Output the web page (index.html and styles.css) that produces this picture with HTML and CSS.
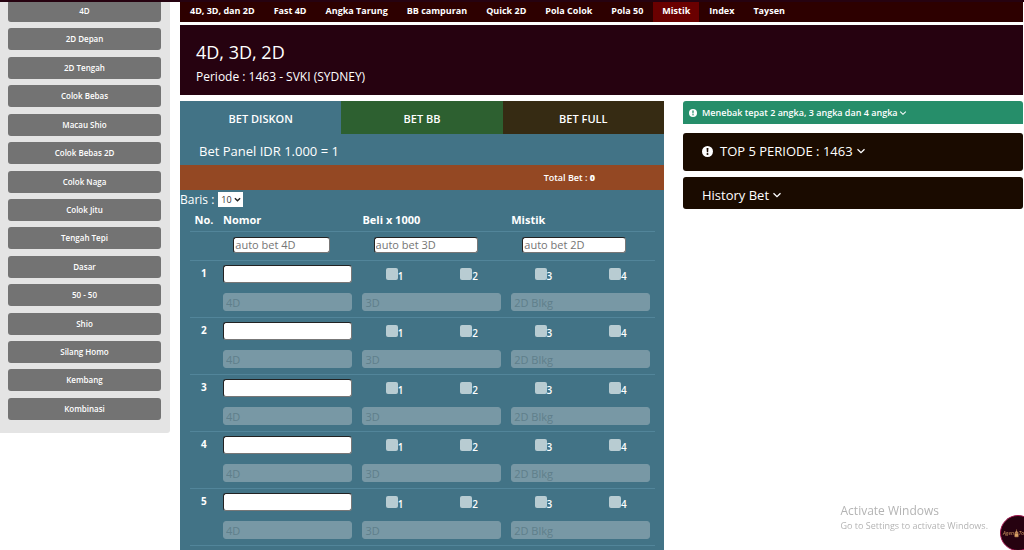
FILE: index.html
```html
<!DOCTYPE html>
<html lang="id">
<head>
<meta charset="utf-8">
<meta name="viewport" content="width=device-width, initial-scale=1">
<title>4D, 3D, 2D</title>
<link rel="stylesheet" href="styles.css">
</head>
<body>
<header class="topbar"></header>
<div class="page">
  <aside class="sidebar">
    <div class="games">
      <button class="game">4D</button>
      <button class="game">2D Depan</button>
      <button class="game">2D Tengah</button>
      <button class="game">Colok Bebas</button>
      <button class="game">Macau Shio</button>
      <button class="game">Colok Bebas 2D</button>
      <button class="game">Colok Naga</button>
      <button class="game">Colok Jitu</button>
      <button class="game">Tengah Tepi</button>
      <button class="game">Dasar</button>
      <button class="game">50 - 50</button>
      <button class="game">Shio</button>
      <button class="game">Silang Homo</button>
      <button class="game">Kembang</button>
      <button class="game">Kombinasi</button>
    </div>
  </aside>
  <main class="main">
    <nav class="nav">
      <a href="#">4D, 3D, dan 2D</a>
      <a href="#">Fast 4D</a>
      <a href="#">Angka Tarung</a>
      <a href="#">BB campuran</a>
      <a href="#">Quick 2D</a>
      <a href="#">Pola Colok</a>
      <a href="#">Pola 50</a>
      <a href="#" class="active">Mistik</a>
      <a href="#">Index</a>
      <a href="#">Taysen</a>
    </nav>
    <section class="hero">
      <h1>4D, 3D, 2D</h1>
      <p>Periode : 1463 - SVKI (SYDNEY)</p>
    </section>
    <div class="columns">
      <section class="panel">
        <div class="tabs">
          <button class="tab">BET DISKON</button>
          <button class="tab tab-bb">BET BB</button>
          <button class="tab tab-full">BET FULL</button>
        </div>
        <h2 class="panel-title">Bet Panel IDR 1.000 = 1</h2>
        <div class="total">Total Bet : <b>0</b></div>
        <div class="rows-select">
          <label for="baris">Baris :</label>
          <select id="baris"><option>10</option><option>20</option></select>
        </div>
        <table class="bets">
          <colgroup><col class="c-no"><col class="c-num"><col class="c-half"><col class="c-half"><col class="c-half"><col class="c-half"></colgroup>
          <thead>
            <tr><th class="no">No.</th><th>Nomor</th><th colspan="2">Beli x 1000</th><th colspan="2">Mistik</th></tr>
            <tr class="auto">
              <td></td>
              <td><input type="text" placeholder="auto bet 4D" aria-label="auto bet 4D"></td>
              <td colspan="2"><input type="text" placeholder="auto bet 3D" aria-label="auto bet 3D"></td>
              <td colspan="2"><input type="text" placeholder="auto bet 2D" aria-label="auto bet 2D"></td>
            </tr>
          </thead>
          <tbody id="bet-rows"></tbody>
        </table>
      </section>
      <aside class="info">
        <button class="hint">
          <svg class="mark" viewBox="0 0 16 16"><circle cx="8" cy="8" r="8" fill="#fff"/><path d="M6.6 3h2.8l-.4 6H7z" fill="currentColor"/><circle cx="8" cy="11.7" r="1.5" fill="currentColor"/></svg>
          <span>Menebak tepat 2 angka, 3 angka dan 4 angka</span>
          <svg class="chev" viewBox="0 0 10 10"><path d="M1.5 3.2 5 6.7l3.5-3.5" fill="none" stroke="#fff" stroke-width="1.3"/></svg>
        </button>
        <button class="card card-top">
          <svg class="mark" viewBox="0 0 16 16"><circle cx="8" cy="8" r="8" fill="#fff"/><path d="M6.6 3h2.8l-.4 6H7z" fill="currentColor"/><circle cx="8" cy="11.7" r="1.5" fill="currentColor"/></svg>
          <span>TOP 5 PERIODE : 1463</span>
          <svg class="chev" viewBox="0 0 10 10"><path d="M1.5 3.2 5 6.7l3.5-3.5" fill="none" stroke="#fff" stroke-width="1.3"/></svg>
        </button>
        <button class="card">
          <span>History Bet</span>
          <svg class="chev" viewBox="0 0 10 10"><path d="M1.5 3.2 5 6.7l3.5-3.5" fill="none" stroke="#fff" stroke-width="1.3"/></svg>
        </button>
      </aside>
    </div>
  </main>
</div>
<div class="activate">
  <p class="activate-title">Activate Windows</p>
  <p>Go to Settings to activate Windows.</p>
</div>
<a class="badge" href="#"><span>Agen</span><svg viewBox="0 0 6 10"><path d="M3 0v3M1 4h4L3 2zM1 5h4v4H1z" fill="#d9a066" stroke="#d9a066" stroke-width=".6"/></svg><span>To</span></a>
<script src="rows.js"></script>
</body>
</html>
```
FILE: styles.css
```css
* { box-sizing: border-box; }
body {
  margin: 0;
  background: #fff;
  color: #fff;
  font-family: "Open Sans", "Noto Sans", sans-serif;
  font-size: 11px;
  line-height: 16px;
}
button, input, select { font: inherit; color: inherit; margin: 0; }
button { border: 0; cursor: pointer; }
h1, h2, p { margin: 0; font-weight: 400; }

.topbar {
  position: fixed;
  top: 0;
  left: 0;
  right: 0;
  height: 2px;
  background: #260210;
  z-index: 2;
}
.page { display: flex; align-items: flex-start; gap: 10px; padding-right: 1px; }

.sidebar {
  flex: 0 0 170px;
  padding: 0 9px 13px 8px;
  background: #e4e4e4;
  border-radius: 0 0 3px 0;
}
.games {
  display: flex;
  flex-direction: column;
  justify-content: space-between;
  min-height: 420px;
}
.game {
  height: 22px;
  padding: 0;
  border-radius: 3px;
  background: #737373;
  font-size: 8px;
  font-weight: 600;
  line-height: 22px;
}

.main { flex: 1; min-width: 0; }
.nav { display: flex; gap: 1px; height: 22px; padding: 2px 1px 0; background: #2d0000; }
.nav a {
  padding: 0 9px;
  color: #fff;
  font-size: 9px;
  font-weight: 700;
  line-height: 18px;
  text-decoration: none;
  white-space: nowrap;
}
.nav .active { background: #6a0000; }
.hero { margin: 3px 0 6px; padding: 15px 16px 6px; background: #260210; }
.hero h1 { font-size: 18px; line-height: 24px; }
.hero p { font-size: 12px; line-height: 25px; }

.columns {
  display: grid;
  grid-template-columns: 484fr 340fr;
  gap: 19px;
  align-items: start;
}
.panel { padding-bottom: 4px; background: #427386; }
.tabs { display: grid; grid-template-columns: 1fr 1fr 1fr; }
.tab { height: 33px; padding: 2px 0 0; background: #427386; font-size: 11px; font-weight: 600; }
.tab-bb { background: #2d6030; }
.tab-full { background: #362b13; }
.panel-title { padding: 3px 19px 0; font-size: 13px; line-height: 28px; }
.total {
  padding-right: 69px;
  background: #944823;
  font-size: 9px;
  font-weight: 600;
  line-height: 25px;
  text-align: right;
}
.rows-select { display: flex; align-items: center; gap: 4px; height: 19px; font-size: 12px; }
.rows-select select {
  width: 25px;
  height: 15px;
  padding: 0 0 0 3px;
  border: 0;
  appearance: none;
  background: #fff url("data:image/svg+xml,%3Csvg xmlns='http://www.w3.org/2000/svg' viewBox='0 0 8 8'%3E%3Cpath d='M1 2.5 4 5.5l3-3' fill='none' stroke='%23222' stroke-width='1.6'/%3E%3C/svg%3E") no-repeat right 2px center / 7px 7px;
  color: #333;
  font-size: 9px;
}

.bets {
  width: calc(100% - 19px);
  margin-left: 10px;
  border-collapse: collapse;
  border-bottom: 1px solid #52859a;
  table-layout: fixed;
}
.c-no { width: 27px; }
.c-num { width: 30%; }
.c-half { width: 16%; }
.bets th, .bets td { padding: 0 5px; vertical-align: middle; }
.bets th { height: 22px; font-size: 11px; font-weight: 700; text-align: left; }
.bets .no { padding: 0; text-align: center; font-weight: 700; }
.bets tbody .no { font-size: 10px; padding-bottom: 2px; }
.bets .auto td { height: 29px; padding-bottom: 1px; }
.bets tr.auto, .bets tr.first { border-top: 1px solid #52859a; }
.bets tr.first td { height: 28px; text-align: center; }
.bets tr.second td { height: 29px; }
.bets input[type="text"] {
  display: block;
  width: 100%;
  height: 18px;
  padding: 0 2px;
  border: 1px solid #777;
  border-top-color: #222;
  border-left-color: #222;
  border-radius: 3px;
  background: #fff;
  color: #222;
  font-size: 11px;
  line-height: 16px;
}
.bets .auto input[type="text"] { width: 75%; height: 16px; margin-left: 8%; padding: 0 1px; }
.bets input::placeholder { color: #757575; opacity: 1; }
.bets input[type="text"]:disabled { border-color: #7898a5; background: #7898a5; }
.bets input:disabled::placeholder { color: #5f7f8b; }
.check { display: inline-flex; align-items: center; font-size: 10px; font-weight: 600; }
.check span { padding-top: 3px; }
.check input {
  appearance: none;
  width: 12px;
  height: 12px;
  border-radius: 2px;
  background: #b8ccd2;
}

.info { display: flex; flex-direction: column; }
.info button {
  display: flex;
  align-items: center;
  width: 100%;
  border-radius: 3px;
  text-align: left;
  white-space: nowrap;
}
.info .hint {
  height: 23px;
  margin-bottom: 9px;
  padding: 0 6px;
  border-radius: 3px 3px 0 0;
  background: #268e6a;
  font-size: 9px;
  font-weight: 600;
}
.mark { width: 8px; height: 8px; margin-right: 5px; color: #268e6a; }
.chev { width: 8px; height: 8px; margin-left: 1px; }
.info .card { height: 32px; padding: 4px 19px 0; background: #1a0b00; font-size: 13px; }
.info .card-top { height: 38px; margin-bottom: 6px; padding: 0 19px 2px; }
.card .mark { width: 11px; height: 11px; margin-right: 7px; color: #1a0b00; }
.card .chev { width: 10px; height: 10px; margin-left: 3px; }

.activate {
  position: fixed;
  right: 36px;
  bottom: 17px;
  color: #b4b4b4;
  font-size: 9px;
  line-height: 14px;
}
.activate-title { font-size: 12px; line-height: 16px; }
.badge {
  position: fixed;
  right: -12px;
  bottom: -1px;
  display: flex;
  align-items: center;
  width: 36px;
  height: 36px;
  padding-left: 2px;
  border: 1px solid #a3164f;
  border-radius: 50%;
  background: #260210;
  color: #d9a066;
  font-size: 5px;
  font-style: italic;
  text-decoration: none;
}
.badge svg { width: 5px; height: 9px; }
```
FILE: rows.js
```js
const body = document.getElementById("bet-rows");
const check = (row, n) =>
  `<td><label class="check"><input type="checkbox" name="r${row}c${n}"><span>${n}</span></label></td>`;
let html = "";
for (let row = 1; row <= 5; row++) {
  html += `<tr class="first"><td class="no">${row}</td>
    <td><input type="text" aria-label="Nomor ${row}"></td>
    ${[1, 2, 3, 4].map((n) => check(row, n)).join("")}</tr>
    <tr class="second"><td></td>
    <td><input type="text" placeholder="4D" aria-label="4D ${row}" disabled></td>
    <td colspan="2"><input type="text" placeholder="3D" aria-label="3D ${row}" disabled></td>
    <td colspan="2"><input type="text" placeholder="2D Blkg" aria-label="2D Blkg ${row}" disabled></td></tr>`;
}
body.innerHTML = html;
```
